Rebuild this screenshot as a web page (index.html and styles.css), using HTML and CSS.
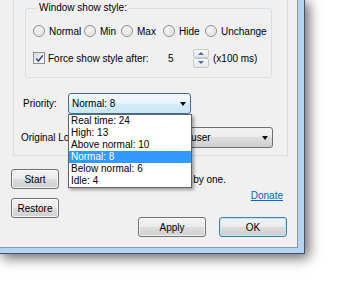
FILE: index.html
```html
<!DOCTYPE html>
<html lang="en">
<head>
    <meta charset="UTF-8">
    <meta name="viewport" content="width=device-width, initial-scale=1.0">
    <title>Settings</title>
    <link rel="stylesheet" href="styles.css">
</head>
<body>
    <div class="frame">
        <div class="client">
            <div class="page">
                <fieldset class="group">
                    <legend>Window show style:</legend>
                    <div class="radios">
                        <label class="opt"><span class="radio"></span>Normal</label>
                        <label class="opt"><span class="radio"></span>Min</label>
                        <label class="opt"><span class="radio"></span>Max</label>
                        <label class="opt"><span class="radio"></span>Hide</label>
                        <label class="opt"><span class="radio"></span>Unchange</label>
                    </div>
                    <div class="force">
                        <label class="opt force-opt">
                            <span class="check">
                                <svg width="9" height="9" viewBox="0 0 9 9"><path d="M1.2 4.6 L3.4 7 L7.8 1.4" fill="none" stroke="#2b4a86" stroke-width="1.5"/></svg>
                            </span>Force show style after:
                        </label>
                        <span class="num">5</span>
                        <span class="spin">
                            <span class="spin-btn"><span class="tri up"></span></span>
                            <span class="spin-btn"><span class="tri down"></span></span>
                        </span>
                        <span class="unit">(x100 ms)</span>
                    </div>
                </fieldset>

                <div class="field prio">
                    <span class="field-label">Priority:</span>
                    <div class="combo open">
                        <span class="combo-text">Normal: 8</span>
                        <span class="arrow"></span>
                        <!-- opened list -->
                        <ul class="droplist">
                            <li>Real time: 24</li>
                            <li>High: 13</li>
                            <li>Above normal: 10</li>
                            <li class="sel">Normal: 8</li>
                            <li>Below normal: 6</li>
                            <li>Idle: 4</li>
                        </ul>
                    </div>
                </div>

                <div class="field user">
                    <span class="field-label user-label">Original Logon:</span>
                    <div class="combo plain">
                        <span class="combo-text">Current user</span>
                        <span class="arrow"></span>
                    </div>
                </div>
            </div>

            <div class="bottom">
                <div class="left-col">
                    <button class="btn small">Start</button>
                    <button class="btn small">Restore</button>
                </div>
                <div class="right-col">
                    <p class="hint">Start all programs one by one.</p>
                    <a class="donate" href="#">Donate</a>
                    <div class="actions">
                        <button class="btn wide">Apply</button>
                        <button class="btn wide default">OK</button>
                    </div>
                </div>
            </div>
        </div>
    </div>
</body>
</html>
```

FILE: styles.css
```css
body {
    margin: 0;
    width: 340px;
    height: 288px;
    overflow: hidden;
    background: #fff;
    font-family: "Liberation Sans", Arial, sans-serif;
    font-size: 10px;
    color: #000;
}
.frame {
    width: 298px;
    height: 248px;
    padding: 0 6px 5px 0;
    background: #b3d4f3;
    border-right: 1px solid #46525e;
    border-bottom: 1px solid #46525e;
    box-shadow: 3px 3px 12px 1px rgba(0, 0, 0, 0.6);
}
.client {
    width: 297px;
    height: 247px;
    background: #f0f0f0;
    border-right: 1px solid #8e9aa6;
    border-bottom: 1px solid #8e9aa6;
}
.page {
    box-sizing: border-box;
    margin-left: 13px;
    width: 275px;
    height: 156px;
    border: 1px solid #d5dfe5;
    border-top: none;
    padding-top: 2px;
}
.group {
    margin: 0 0 0 11px;
    width: 247px;
    box-sizing: border-box;
    border: 1px solid #d5dfe5;
    border-radius: 3px;
    padding: 10px 0 9px 7px;
}
.group legend {
    padding: 0 2px;
    margin-left: 4px;
    line-height: 12px;
}
.radios {
    display: grid;
    grid-template-columns: 51px 37px 42px 42px auto;
    height: 14px;
    align-items: center;
}
.opt {
    display: flex;
    align-items: center;
    white-space: nowrap;
}
.radio {
    width: 10px;
    height: 10px;
    margin-right: 4px;
    border: 1px solid #8f8f8f;
    border-radius: 50%;
    background: radial-gradient(circle at 40% 40%, #fafafa 0%, #e4e4e4 55%, #cfcfcf 100%);
    box-shadow: inset 0 0 0 1px #f4f4f4;
}
.force {
    display: flex;
    align-items: center;
    height: 20px;
    margin-top: 10px;
}
.force-opt { width: 130px; }
.check {
    box-sizing: border-box;
    width: 12px;
    height: 12px;
    margin-right: 3px;
    border: 1px solid #8f8f8f;
    background: linear-gradient(135deg, #dcdcdc, #fbfbfb);
    display: flex;
    align-items: center;
    justify-content: center;
}
.num {
    width: 30px;
    padding-left: 5px;
    box-sizing: border-box;
}
.spin {
    display: flex;
    flex-direction: column;
    width: 16px;
    height: 19px;
    margin-right: 4px;
}
.spin-btn {
    flex: 1;
    border: 1px solid #c4c8cc;
    border-radius: 2px;
    background: linear-gradient(#f7f7f7, #e6e6e6);
    display: flex;
    align-items: center;
    justify-content: center;
}
.tri {
    width: 0;
    height: 0;
    border-left: 3px solid transparent;
    border-right: 3px solid transparent;
}
.tri.up { border-bottom: 3px solid #4a6ea8; }
.tri.down { border-top: 3px solid #4a6ea8; }

.field {
    display: flex;
    align-items: center;
}
.prio { margin: 15px 0 0 9px; }
.user { margin: 13px 0 0 7px; }
.field-label { width: 45px; }
.user-label { width: 130px; white-space: nowrap; }
.combo {
    position: relative;
    box-sizing: border-box;
    height: 21px;
    display: flex;
    align-items: center;
    padding-left: 3px;
    border-radius: 3px;
}
.combo.open {
    width: 123px;
    border: 1px solid #3c6f9f;
    background: linear-gradient(#f4fafe, #e4f2fb 50%, #d6ecf9 50%, #cbe6f7);
}
.combo.plain {
    width: 122px;
    border: 1px solid #707070;
    background: linear-gradient(#f2f2f2, #ebebeb 50%, #dddddd 50%, #cfcfcf);
}
.arrow {
    margin-left: auto;
    margin-right: 4px;
    width: 0;
    height: 0;
    border-left: 3.5px solid transparent;
    border-right: 3.5px solid transparent;
    border-top: 4px solid #000;
}
.droplist {
    position: absolute;
    left: -1px;
    top: calc(100% + 1px);
    width: 124px;
    box-sizing: border-box;
    margin: 0;
    padding: 0;
    list-style: none;
    background: #fff;
    border: 1px solid #646464;
    box-shadow: 2px 2px 3px rgba(0, 0, 0, 0.35);
    z-index: 2;
}
.droplist li {
    height: 12px;
    line-height: 12px;
    padding-left: 2px;
}
.droplist li.sel {
    background: #3399ff;
    color: #fff;
}

.bottom { display: flex; }
.left-col {
    display: flex;
    flex-direction: column;
    gap: 9px;
    padding: 13px 0 0 11px;
}
.right-col {
    flex: 1;
    display: flex;
    flex-direction: column;
    padding-top: 18px;
}
.btn {
    font: inherit;
    color: #000;
    height: 20px;
    padding: 0;
    border: 1px solid #707070;
    border-radius: 3px;
    background: linear-gradient(#f2f2f2, #ebebeb 50%, #dddddd 50%, #cfcfcf);
    box-shadow: inset 0 0 0 1px rgba(255, 255, 255, 0.75);
}
.btn.small { width: 48px; }
.btn.wide { width: 68px; }
.btn.default {
    border-color: #3c7fb1;
    box-shadow: inset 0 0 0 1px #bfe8fc;
}
.hint {
    margin: 0 0 0 33px;
    line-height: 12px;
    white-space: nowrap;
}
.donate {
    align-self: flex-end;
    margin: 4px 14px 0 0;
    line-height: 12px;
    color: #0066cc;
}
.actions {
    display: flex;
    justify-content: flex-end;
    gap: 13px;
    margin: 15px 10px 0 0;
}
```
